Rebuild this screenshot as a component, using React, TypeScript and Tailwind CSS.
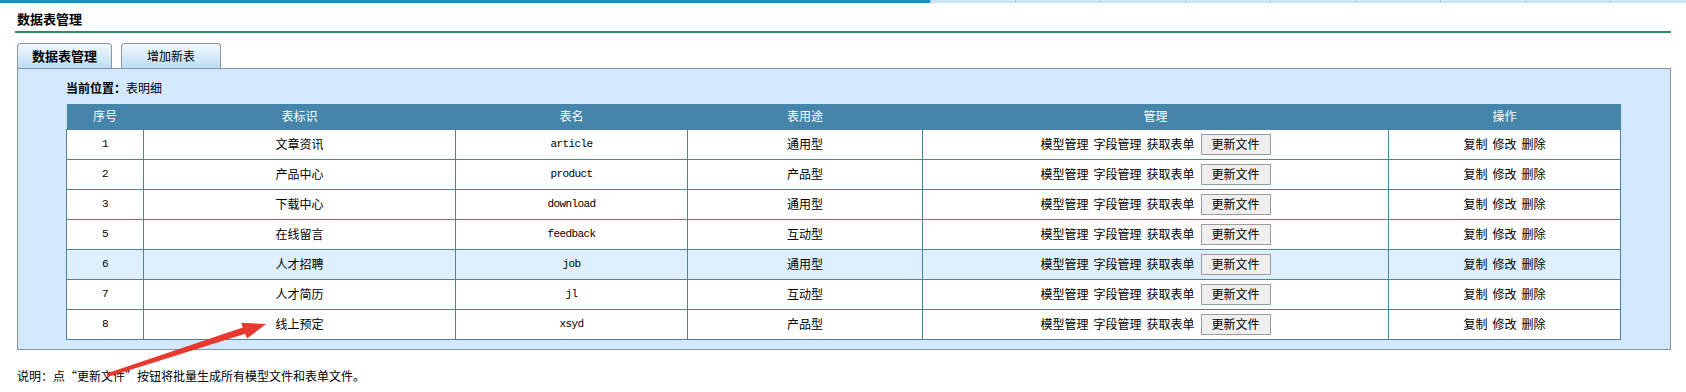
import React from 'react';

const rows = [
  { id: '1', label: '文章资讯', name: 'article', use: '通用型' },
  { id: '2', label: '产品中心', name: 'product', use: '产品型' },
  { id: '3', label: '下载中心', name: 'download', use: '通用型' },
  { id: '5', label: '在线留言', name: 'feedback', use: '互动型' },
  { id: '6', label: '人才招聘', name: 'job', use: '通用型', hl: true },
  { id: '7', label: '人才简历', name: 'jl', use: '互动型' },
  { id: '8', label: '线上预定', name: 'xsyd', use: '产品型' },
];

const cjk = "font-['Noto_Sans_CJK_SC','Noto_Sans',sans-serif]";
const mono = "font-['Liberation_Mono','Noto_Sans_CJK_SC',monospace] text-[11px] tracking-[-0.6px]";

export default function App() {
  return (
    <div className={`relative w-[1686px] h-[392px] overflow-hidden bg-white text-[12px] text-black ${cjk}`}>
      {/* top strip */}
      <div className="flex h-[3px]">
        <div className="w-[930px] bg-[#1a8fc4]" />
        {Array.from({ length: 8 }).map((_, i) => (
          <div key={i} className="w-[85px] border-l border-[#9fcfe8] bg-[#cbe9f8]" />
        ))}
        <div className="flex-1 border-l border-[#9fcfe8] bg-[#cbe9f8]" />
      </div>

      {/* title */}
      <div className="mx-[15px] flex h-[30px] items-center border-b-2 border-[#2f876d] pt-[3px] pl-[2px] text-[13px] font-bold leading-none">
        数据表管理
      </div>

      {/* tabs */}
      <div className="ml-[17px] mt-[10px] flex gap-[9px]">
        <div className="flex h-[25px] w-[95px] items-center justify-center rounded-t-[4px] border border-b-0 border-[#8a97a2] bg-gradient-to-b from-[#f2f9fe] to-[#bcdff6] text-[13px] font-bold">
          数据表管理
        </div>
        <div className="flex h-[25px] w-[100px] items-center justify-center rounded-t-[4px] border border-b-0 border-[#8a97a2] bg-gradient-to-b from-[#f2f9fe] to-[#bcdff6] text-[12px]">
          增加新表
        </div>
      </div>

      {/* panel */}
      <div className="ml-[17px] w-[1654px] border border-[#8693a0] bg-[#d3e9fb] pl-[48px] pr-[50px] pb-[9px]">
        <div className="flex h-[35px] items-center pt-[3px]">
          <span className="font-bold">当前位置：</span>
          <span>表明细</span>
        </div>
        <table className="w-[1554px] table-fixed border-collapse">
          <colgroup>
            <col className="w-[77px]" />
            <col className="w-[312px]" />
            <col className="w-[232px]" />
            <col className="w-[235px]" />
            <col className="w-[466px]" />
            <col className="w-[232px]" />
          </colgroup>
          <thead>
            <tr className="h-[25px] bg-[#4585a9] text-white">
              {['序号', '表标识', '表名', '表用途', '管理', '操作'].map((h) => (
                <th key={h} className="p-0 text-center font-normal">{h}</th>
              ))}
            </tr>
          </thead>
          <tbody>
            {rows.map((r) => (
              <tr key={r.id} className={`h-[30px] ${r.hl ? 'bg-[#def0fe]' : 'bg-white'}`}>
                <td className={`border border-[#4e82a2] p-0 text-center ${mono}`}>{r.id}</td>
                <td className="border border-[#4e82a2] p-0 text-center">{r.label}</td>
                <td className={`border border-[#4e82a2] p-0 text-center ${mono}`}>{r.name}</td>
                <td className="border border-[#4e82a2] p-0 text-center">{r.use}</td>
                <td className="border border-[#4e82a2] p-0">
                  <div className="flex items-center justify-center gap-[5px]">
                    <span>模型管理</span>
                    <span>字段管理</span>
                    <span>获取表单</span>
                    <button className="ml-[1px] flex h-[21px] w-[70px] items-center justify-center border border-[#9b9b9b] bg-[#efefef] text-[12px]">
                      更新文件
                    </button>
                  </div>
                </td>
                <td className="border border-[#4e82a2] p-0">
                  <div className="flex items-center justify-center gap-[5px]">
                    <span>复制</span>
                    <span>修改</span>
                    <span>删除</span>
                  </div>
                </td>
              </tr>
            ))}
          </tbody>
        </table>
      </div>

      {/* note */}
      <div className="ml-[17px] mt-[17px] leading-[18px]">
        说明：点“更新文件”按钮将批量生成所有模型文件和表单文件。
      </div>

      {/* red annotation arrow */}
      <svg className="pointer-events-none absolute left-0 top-0" width="1686" height="392">
        <polygon
          points="106.5,373.6 242.8,327.6 241.2,322.8 266,324 247,338.5 245.3,333.8 107.5,377"
          fill="#e8382f"
        />
      </svg>
    </div>
  );
}
